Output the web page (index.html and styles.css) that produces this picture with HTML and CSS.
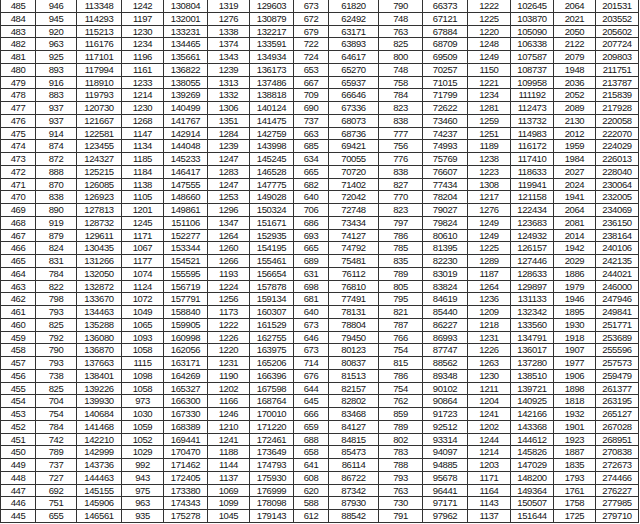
FILE: index.html
```html
<!DOCTYPE html>
<html lang="zh">
<head>
<meta charset="utf-8">
<title>分数段统计表</title>
<link rel="stylesheet" href="styles.css">
</head>
<body>
<div class="sheet">
<div class="row"><span>485</span><span>946</span><span>113348</span><span>1242</span><span>130804</span><span>1319</span><span>129603</span><span>673</span><span>61820</span><span>790</span><span>66373</span><span>1222</span><span>102645</span><span>2064</span><span>201531</span></div>
<div class="row"><span>484</span><span>945</span><span>114293</span><span>1197</span><span>132001</span><span>1276</span><span>130879</span><span>672</span><span>62492</span><span>748</span><span>67121</span><span>1225</span><span>103870</span><span>2021</span><span>203552</span></div>
<div class="row"><span>483</span><span>920</span><span>115213</span><span>1230</span><span>133231</span><span>1338</span><span>132217</span><span>679</span><span>63171</span><span>763</span><span>67884</span><span>1220</span><span>105090</span><span>2050</span><span>205602</span></div>
<div class="row"><span>482</span><span>963</span><span>116176</span><span>1234</span><span>134465</span><span>1374</span><span>133591</span><span>722</span><span>63893</span><span>825</span><span>68709</span><span>1248</span><span>106338</span><span>2122</span><span>207724</span></div>
<div class="row"><span>481</span><span>925</span><span>117101</span><span>1196</span><span>135661</span><span>1343</span><span>134934</span><span>724</span><span>64617</span><span>800</span><span>69509</span><span>1249</span><span>107587</span><span>2079</span><span>209803</span></div>
<div class="row"><span>480</span><span>893</span><span>117994</span><span>1161</span><span>136822</span><span>1239</span><span>136173</span><span>653</span><span>65270</span><span>748</span><span>70257</span><span>1150</span><span>108737</span><span>1948</span><span>211751</span></div>
<div class="row"><span>479</span><span>916</span><span>118910</span><span>1233</span><span>138055</span><span>1313</span><span>137486</span><span>667</span><span>65937</span><span>758</span><span>71015</span><span>1221</span><span>109958</span><span>2036</span><span>213787</span></div>
<div class="row"><span>478</span><span>883</span><span>119793</span><span>1214</span><span>139269</span><span>1332</span><span>138818</span><span>709</span><span>66646</span><span>784</span><span>71799</span><span>1234</span><span>111192</span><span>2052</span><span>215839</span></div>
<div class="row"><span>477</span><span>937</span><span>120730</span><span>1230</span><span>140499</span><span>1306</span><span>140124</span><span>690</span><span>67336</span><span>823</span><span>72622</span><span>1281</span><span>112473</span><span>2089</span><span>217928</span></div>
<div class="row"><span>476</span><span>937</span><span>121667</span><span>1268</span><span>141767</span><span>1351</span><span>141475</span><span>737</span><span>68073</span><span>838</span><span>73460</span><span>1259</span><span>113732</span><span>2130</span><span>220058</span></div>
<div class="row"><span>475</span><span>914</span><span>122581</span><span>1147</span><span>142914</span><span>1284</span><span>142759</span><span>663</span><span>68736</span><span>777</span><span>74237</span><span>1251</span><span>114983</span><span>2012</span><span>222070</span></div>
<div class="row"><span>474</span><span>874</span><span>123455</span><span>1134</span><span>144048</span><span>1239</span><span>143998</span><span>685</span><span>69421</span><span>756</span><span>74993</span><span>1189</span><span>116172</span><span>1959</span><span>224029</span></div>
<div class="row"><span>473</span><span>872</span><span>124327</span><span>1185</span><span>145233</span><span>1247</span><span>145245</span><span>634</span><span>70055</span><span>776</span><span>75769</span><span>1238</span><span>117410</span><span>1984</span><span>226013</span></div>
<div class="row"><span>472</span><span>888</span><span>125215</span><span>1184</span><span>146417</span><span>1283</span><span>146528</span><span>665</span><span>70720</span><span>838</span><span>76607</span><span>1223</span><span>118633</span><span>2027</span><span>228040</span></div>
<div class="row"><span>471</span><span>870</span><span>126085</span><span>1138</span><span>147555</span><span>1247</span><span>147775</span><span>682</span><span>71402</span><span>827</span><span>77434</span><span>1308</span><span>119941</span><span>2024</span><span>230064</span></div>
<div class="row"><span>470</span><span>838</span><span>126923</span><span>1105</span><span>148660</span><span>1253</span><span>149028</span><span>640</span><span>72042</span><span>770</span><span>78204</span><span>1217</span><span>121158</span><span>1941</span><span>232005</span></div>
<div class="row"><span>469</span><span>890</span><span>127813</span><span>1201</span><span>149861</span><span>1296</span><span>150324</span><span>706</span><span>72748</span><span>823</span><span>79027</span><span>1276</span><span>122434</span><span>2064</span><span>234069</span></div>
<div class="row"><span>468</span><span>919</span><span>128732</span><span>1245</span><span>151106</span><span>1347</span><span>151671</span><span>686</span><span>73434</span><span>797</span><span>79824</span><span>1249</span><span>123683</span><span>2081</span><span>236150</span></div>
<div class="row"><span>467</span><span>879</span><span>129611</span><span>1171</span><span>152277</span><span>1264</span><span>152935</span><span>693</span><span>74127</span><span>786</span><span>80610</span><span>1249</span><span>124932</span><span>2014</span><span>238164</span></div>
<div class="row"><span>466</span><span>824</span><span>130435</span><span>1067</span><span>153344</span><span>1260</span><span>154195</span><span>665</span><span>74792</span><span>785</span><span>81395</span><span>1225</span><span>126157</span><span>1942</span><span>240106</span></div>
<div class="row"><span>465</span><span>831</span><span>131266</span><span>1177</span><span>154521</span><span>1266</span><span>155461</span><span>689</span><span>75481</span><span>835</span><span>82230</span><span>1289</span><span>127446</span><span>2029</span><span>242135</span></div>
<div class="row"><span>464</span><span>784</span><span>132050</span><span>1074</span><span>155595</span><span>1193</span><span>156654</span><span>631</span><span>76112</span><span>789</span><span>83019</span><span>1187</span><span>128633</span><span>1886</span><span>244021</span></div>
<div class="row"><span>463</span><span>822</span><span>132872</span><span>1124</span><span>156719</span><span>1224</span><span>157878</span><span>698</span><span>76810</span><span>805</span><span>83824</span><span>1264</span><span>129897</span><span>1979</span><span>246000</span></div>
<div class="row"><span>462</span><span>798</span><span>133670</span><span>1072</span><span>157791</span><span>1256</span><span>159134</span><span>681</span><span>77491</span><span>795</span><span>84619</span><span>1236</span><span>131133</span><span>1946</span><span>247946</span></div>
<div class="row"><span>461</span><span>793</span><span>134463</span><span>1049</span><span>158840</span><span>1173</span><span>160307</span><span>640</span><span>78131</span><span>821</span><span>85440</span><span>1209</span><span>132342</span><span>1895</span><span>249841</span></div>
<div class="row"><span>460</span><span>825</span><span>135288</span><span>1065</span><span>159905</span><span>1222</span><span>161529</span><span>673</span><span>78804</span><span>787</span><span>86227</span><span>1218</span><span>133560</span><span>1930</span><span>251771</span></div>
<div class="row"><span>459</span><span>792</span><span>136080</span><span>1093</span><span>160998</span><span>1226</span><span>162755</span><span>646</span><span>79450</span><span>766</span><span>86993</span><span>1231</span><span>134791</span><span>1918</span><span>253689</span></div>
<div class="row"><span>458</span><span>790</span><span>136870</span><span>1058</span><span>162056</span><span>1220</span><span>163975</span><span>673</span><span>80123</span><span>754</span><span>87747</span><span>1226</span><span>136017</span><span>1907</span><span>255596</span></div>
<div class="row"><span>457</span><span>793</span><span>137663</span><span>1115</span><span>163171</span><span>1231</span><span>165206</span><span>714</span><span>80837</span><span>815</span><span>88562</span><span>1263</span><span>137280</span><span>1977</span><span>257573</span></div>
<div class="row"><span>456</span><span>738</span><span>138401</span><span>1098</span><span>164269</span><span>1190</span><span>166396</span><span>676</span><span>81513</span><span>786</span><span>89348</span><span>1230</span><span>138510</span><span>1906</span><span>259479</span></div>
<div class="row"><span>455</span><span>825</span><span>139226</span><span>1058</span><span>165327</span><span>1202</span><span>167598</span><span>644</span><span>82157</span><span>754</span><span>90102</span><span>1211</span><span>139721</span><span>1898</span><span>261377</span></div>
<div class="row"><span>454</span><span>704</span><span>139930</span><span>973</span><span>166300</span><span>1166</span><span>168764</span><span>645</span><span>82802</span><span>762</span><span>90864</span><span>1204</span><span>140925</span><span>1818</span><span>263195</span></div>
<div class="row"><span>453</span><span>754</span><span>140684</span><span>1030</span><span>167330</span><span>1246</span><span>170010</span><span>666</span><span>83468</span><span>859</span><span>91723</span><span>1241</span><span>142166</span><span>1932</span><span>265127</span></div>
<div class="row"><span>452</span><span>784</span><span>141468</span><span>1059</span><span>168389</span><span>1210</span><span>171220</span><span>659</span><span>84127</span><span>789</span><span>92512</span><span>1202</span><span>143368</span><span>1901</span><span>267028</span></div>
<div class="row"><span>451</span><span>742</span><span>142210</span><span>1052</span><span>169441</span><span>1241</span><span>172461</span><span>688</span><span>84815</span><span>802</span><span>93314</span><span>1244</span><span>144612</span><span>1923</span><span>268951</span></div>
<div class="row"><span>450</span><span>789</span><span>142999</span><span>1029</span><span>170470</span><span>1188</span><span>173649</span><span>658</span><span>85473</span><span>783</span><span>94097</span><span>1214</span><span>145826</span><span>1887</span><span>270838</span></div>
<div class="row"><span>449</span><span>737</span><span>143736</span><span>992</span><span>171462</span><span>1144</span><span>174793</span><span>641</span><span>86114</span><span>788</span><span>94885</span><span>1203</span><span>147029</span><span>1835</span><span>272673</span></div>
<div class="row"><span>448</span><span>727</span><span>144463</span><span>943</span><span>172405</span><span>1137</span><span>175930</span><span>608</span><span>86722</span><span>793</span><span>95678</span><span>1171</span><span>148200</span><span>1793</span><span>274466</span></div>
<div class="row"><span>447</span><span>692</span><span>145155</span><span>975</span><span>173380</span><span>1069</span><span>176999</span><span>620</span><span>87342</span><span>763</span><span>96441</span><span>1164</span><span>149364</span><span>1761</span><span>276227</span></div>
<div class="row"><span>446</span><span>751</span><span>145906</span><span>963</span><span>174343</span><span>1099</span><span>178098</span><span>588</span><span>87930</span><span>730</span><span>97171</span><span>1143</span><span>150507</span><span>1758</span><span>277985</span></div>
<div class="row"><span>445</span><span>655</span><span>146561</span><span>935</span><span>175278</span><span>1045</span><span>179143</span><span>612</span><span>88542</span><span>791</span><span>97962</span><span>1137</span><span>151644</span><span>1725</span><span>279710</span></div>
</div>
</body>
</html>
```

FILE: styles.css
```css
html, body {
  margin: 0;
  padding: 0;
  background: #ffffff;
  overflow: hidden;
}

.sheet {
  display: grid;
  grid-template-columns: 34px 40px 44px 41px 43px 41px 43px 34px 49px 43px 44px 42px 42px 41px 42px;
  grid-auto-rows: 11.75px;
  gap: 1px;
  width: max-content;
  background: #333333;
  border: 1px solid #333333;
  margin-top: -1px;
  font-family: "Liberation Sans", Arial, sans-serif;
  font-size: 9.5px;
  letter-spacing: -0.4px;
  color: #151515;
}

.row {
  display: contents;
}

.row span {
  background: #ffffff;
  display: flex;
  align-items: center;
  justify-content: center;
  line-height: 1;
  white-space: nowrap;
}
```
